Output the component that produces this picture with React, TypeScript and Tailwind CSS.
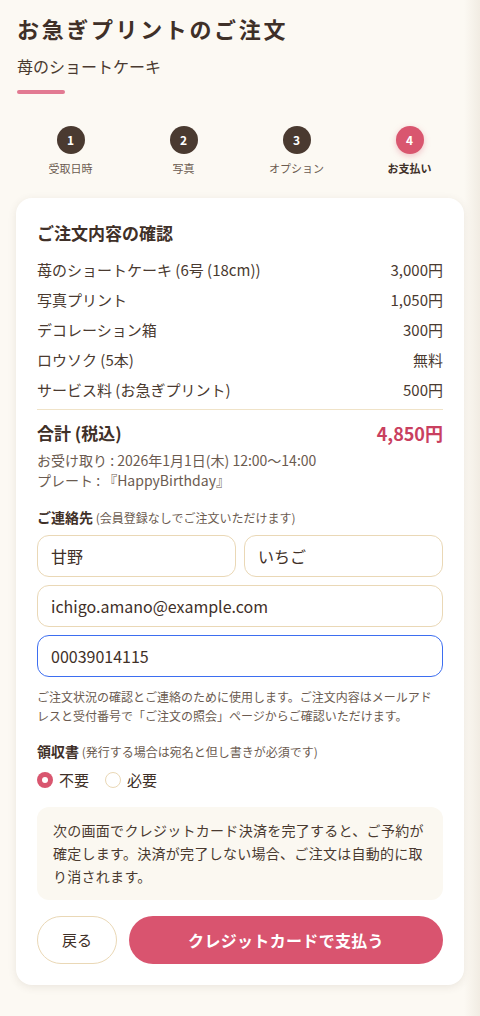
import { useState } from 'react';

const steps = [
  { n: 1, label: '受取日時' },
  { n: 2, label: '写真' },
  { n: 3, label: 'オプション' },
  { n: 4, label: 'お支払い' },
];

const items = [
  { name: '苺のショートケーキ (6号 (18cm))', price: '3,000円' },
  { name: '写真プリント', price: '1,050円' },
  { name: 'デコレーション箱', price: '300円' },
  { name: 'ロウソク (5本)', price: '無料' },
  { name: 'サービス料 (お急ぎプリント)', price: '500円' },
];

export default function App() {
  const [receipt, setReceipt] = useState<'no' | 'yes'>('no');

  return (
    <div
      className="relative min-h-[1016px] bg-[#fcf9f3] text-[#4a3a30]"
      style={{ fontFamily: '"Noto Sans CJK JP", "Noto Sans", sans-serif' }}
    >
      <div className="pointer-events-none absolute right-0 top-0 h-full w-[16px] bg-gradient-to-r from-transparent to-[#f1ece3]" />

      <header className="px-[17px] pt-[12px]">
        <h1 className="text-[22px] font-bold leading-[32px] tracking-[0.12em] text-[#3f3028]">
          お急ぎプリントのご注文
        </h1>
        <p className="mt-[10px] text-[16px] leading-[24px] text-[#4a3a30]">苺のショートケーキ</p>
        <div className="mt-[12px] h-[4px] w-[48px] rounded-full bg-[#e27a92]" />
      </header>

      <nav className="mt-[32px] grid grid-cols-4 px-[14px]">
        {steps.map((s) => {
          const active = s.n === 4;
          return (
            <div key={s.n} className="flex flex-col items-center">
              <div
                className={`flex h-[28px] w-[28px] items-center justify-center rounded-full text-[12px] font-bold text-white ${
                  active ? 'bg-[#d9566f] shadow-[0_2px_6px_rgba(217,86,111,0.35)]' : 'bg-[#4a3a30]'
                }`}
              >
                {s.n}
              </div>
              <span
                className={`mt-[6px] text-[11px] leading-[16px] ${
                  active ? 'font-bold text-[#3f3028]' : 'text-[#6b5b50]'
                }`}
              >
                {s.label}
              </span>
            </div>
          );
        })}
      </nav>

      <main className="mx-[16px] mt-[22px] rounded-[16px] bg-white px-[21px] pb-[21px] pt-[22px] shadow-[0_2px_8px_rgba(80,60,40,0.10)]">
        <h2 className="text-[17px] font-bold leading-[26px] text-[#3f3028]">ご注文内容の確認</h2>

        <ul className="mt-[9px]">
          {items.map((it) => (
            <li key={it.name} className="flex justify-between text-[15px] leading-[30px] text-[#4a3a30]">
              <span>{it.name}</span>
              <span>{it.price}</span>
            </li>
          ))}
        </ul>

        <div className="mt-[4px] h-px bg-[#f0e3c8]" />

        <div className="mt-[10px] flex items-center justify-between">
          <span className="text-[17px] font-bold leading-[26px] text-[#3f3028]">合計 (税込)</span>
          <span className="text-[18px] font-bold leading-[26px] text-[#c9405f]">4,850円</span>
        </div>
        <div className="mt-[4px] text-[14px] leading-[20px] text-[#6b5b50]">
          <p>お受け取り : 2026年1月1日(木) 12:00〜14:00</p>
          <p>プレート : 『HappyBirthday』</p>
        </div>

        <p className="mt-[17px] text-[14px] leading-[20px]">
          <span className="font-bold text-[#3f3028]">ご連絡先</span>
          <span className="text-[12px] text-[#6b5b50]"> (会員登録なしでご注文いただけます)</span>
        </p>

        <div className="mt-[7px] grid grid-cols-2 gap-[8px]">
          <input
            defaultValue="甘野"
            className="h-[42px] rounded-[12px] border border-[#ead8b6] bg-white px-[13px] text-[16px] text-[#3f3028] outline-none"
          />
          <input
            defaultValue="いちご"
            className="h-[42px] rounded-[12px] border border-[#ead8b6] bg-white px-[13px] text-[16px] text-[#3f3028] outline-none"
          />
        </div>
        <input
          defaultValue="ichigo.amano@example.com"
          className="mt-[8px] block h-[42px] w-full rounded-[12px] border border-[#ead8b6] bg-white px-[13px] text-[16px] text-[#3f3028] outline-none"
        />
        <input
          defaultValue="00039014115"
          className="mt-[8px] block h-[42px] w-full rounded-[12px] border-[1.5px] border-[#3d6ef0] bg-white px-[13px] text-[16px] text-[#3f3028] outline-none"
        />

        <p className="mt-[10px] text-[12px] leading-[19px] text-[#6b5b50]">
          ご注文状況の確認とご連絡のために使用します。ご注文内容はメールアドレスと受付番号で「ご注文の照会」ページからご確認いただけます。
        </p>

        <p className="mt-[16px] text-[14px] leading-[20px]">
          <span className="font-bold text-[#3f3028]">領収書</span>
          <span className="text-[12px] text-[#6b5b50]"> (発行する場合は宛名と但し書きが必須です)</span>
        </p>

        <div className="mt-[7px] flex items-center gap-[16px] text-[15px] leading-[22px] text-[#3f3028]">
          {(['no', 'yes'] as const).map((v) => {
            const on = receipt === v;
            return (
              <label key={v} className="flex cursor-pointer items-center gap-[6px]" onClick={() => setReceipt(v)}>
                <span
                  className={`flex h-[16px] w-[16px] items-center justify-center rounded-full ${
                    on ? 'bg-[#d9566f]' : 'border border-[#ead8b6] bg-white'
                  }`}
                >
                  {on && <span className="h-[6px] w-[6px] rounded-full bg-white" />}
                </span>
                <span>{v === 'no' ? '不要' : '必要'}</span>
              </label>
            );
          })}
        </div>

        <div className="mt-[16px] rounded-[12px] bg-[#fbf8f1] px-[16px] py-[12px] text-[14px] leading-[23px] tracking-[0.02em] text-[#4a3a30]">
          次の画面でクレジットカード決済を完了すると、ご予約が確定します。決済が完了しない場合、ご注文は自動的に取り消されます。
        </div>

        <div className="mt-[16px] flex gap-[12px]">
          <button className="h-[48px] w-[80px] rounded-full border border-[#ead8b6] bg-white text-[15px] text-[#3f3028]">
            戻る
          </button>
          <button className="h-[48px] flex-1 rounded-full bg-[#d9546f] text-[16px] font-bold tracking-[0.02em] text-white">
            クレジットカードで支払う
          </button>
        </div>
      </main>
    </div>
  );
}
